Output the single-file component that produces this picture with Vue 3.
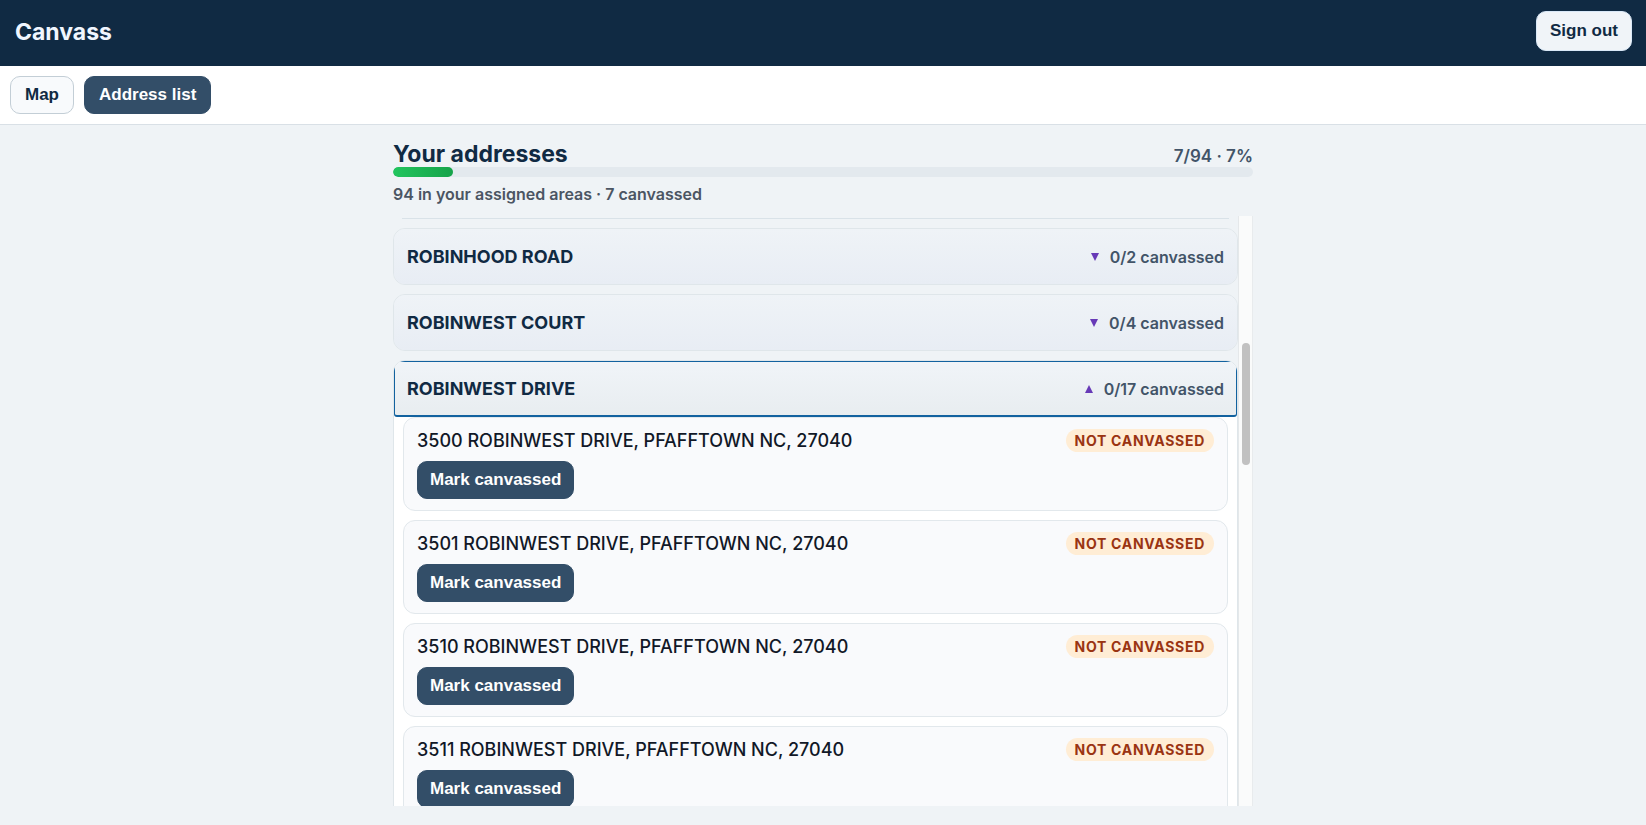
<script setup>
import { ref, computed } from 'vue'

const view = ref('list')
const total = 94
const done = 7
const percent = computed(() => Math.round((done / total) * 100))

const groups = ref([
  { street: 'ROBINHOOD ROAD', done: 0, count: 2, open: false, addresses: [] },
  { street: 'ROBINWEST COURT', done: 0, count: 4, open: false, addresses: [] },
  {
    street: 'ROBINWEST DRIVE',
    done: 0,
    count: 17,
    open: true,
    addresses: [
      '3500 ROBINWEST DRIVE, PFAFFTOWN NC, 27040',
      '3501 ROBINWEST DRIVE, PFAFFTOWN NC, 27040',
      '3510 ROBINWEST DRIVE, PFAFFTOWN NC, 27040',
      '3511 ROBINWEST DRIVE, PFAFFTOWN NC, 27040',
    ],
  },
])
</script>

<template>
  <div class="app">
    <header class="topbar">
      <h1 class="brand">Canvass</h1>
      <button type="button" class="btn sign-out">Sign out</button>
    </header>

    <nav class="tabs">
      <button type="button" class="btn tab" :class="{ active: view === 'map' }" @click="view = 'map'">Map</button>
      <button type="button" class="btn tab" :class="{ active: view === 'list' }" @click="view = 'list'">Address list</button>
    </nav>

    <main class="page">
      <div class="heading">
        <h2 class="title">Your addresses</h2>
        <span class="score">{{ done }}/{{ total }} · {{ percent }}%</span>
      </div>
      <div class="progress" role="progressbar" aria-label="Canvassed" :aria-valuenow="percent">
        <div class="progress-fill" :style="{ width: percent + '%' }"></div>
      </div>
      <p class="summary">{{ total }} in your assigned areas · {{ done }} canvassed</p>

      <div class="scroller">
        <div class="groups">
          <div class="group-end" aria-hidden="true"></div>
          <section v-for="group in groups" :key="group.street" class="group">
            <button
              type="button"
              class="group-head"
              :class="{ open: group.open }"
              :aria-expanded="group.open"
              @click="group.open = !group.open"
            >
              <span class="street">{{ group.street }}</span>
              <svg class="caret" viewBox="0 0 8 8" aria-hidden="true">
                <path :d="group.open ? 'M4 0 L8 8 H0 Z' : 'M0 0 H8 L4 8 Z'" />
              </svg>
              <span class="count">{{ group.done }}/{{ group.count }} canvassed</span>
            </button>
            <ul v-if="group.open" class="cards">
              <li v-for="address in group.addresses" :key="address" class="card">
                <div class="card-top">
                  <span class="address">{{ address }}</span>
                  <span class="badge">NOT CANVASSED</span>
                </div>
                <button type="button" class="btn mark">Mark canvassed</button>
              </li>
            </ul>
          </section>
        </div>
        <div class="track" aria-hidden="true"><div class="thumb"></div></div>
      </div>
    </main>
  </div>
</template>

<style>
body {
  background: #eff3f6;
}
</style>

<style scoped>
.app,
.app * {
  box-sizing: border-box;
}

.app {
  display: flex;
  flex-direction: column;
  height: 100vh;
  overflow: hidden;
  background: #eff3f6;
  color: #102a43;
  font-family: Inter, "Liberation Sans", sans-serif;
}

h1,
h2,
p,
ul {
  margin: 0;
  padding: 0;
}

.btn {
  border: 1px solid transparent;
  border-radius: 10px;
  font-family: "Liberation Sans", Arial, sans-serif;
  font-size: 17px;
  font-weight: 700;
  line-height: 20px;
  cursor: pointer;
}

.topbar {
  flex: none;
  display: flex;
  align-items: flex-start;
  justify-content: space-between;
  height: 66px;
  padding: 11px 14px 0 15px;
  background: #102a43;
}

.brand {
  color: #f0f6ff;
  font-size: 23px;
  line-height: 42px;
  font-weight: 700;
}

.sign-out {
  padding: 8px 13px;
  height: 40px;
  border-color: #d9e8f7;
  background: #f0f4f8;
  color: #102a43;
}

.tabs {
  flex: none;
  display: flex;
  gap: 10px;
  padding: 10px;
  border-bottom: 1px solid #d9e0e6;
  background: #fff;
}

.tab {
  height: 38px;
  padding: 0 14px;
  border-color: #c3ced6;
  background: #f8fafc;
  color: #102a43;
}

.tab.active {
  border-color: #334e68;
  background: #334e68;
  color: #fff;
}

.page {
  flex: 1;
  min-height: 0;
  display: flex;
  flex-direction: column;
  width: 100%;
  max-width: 860px;
  margin: 0 auto;
  padding: 14px 0 19px;
}

.heading {
  display: flex;
  align-items: baseline;
  justify-content: space-between;
  height: 28px;
}

.title {
  color: #102a43;
  font-size: 23px;
  line-height: 30px;
  font-weight: 700;
}

.score {
  color: #425468;
  font-size: 17px;
  font-weight: 600;
}

.progress {
  flex: none;
  height: 10px;
  border-radius: 5px;
  background: #e3e9ee;
  overflow: hidden;
}

.progress-fill {
  height: 100%;
  border-radius: 5px;
  background: linear-gradient(90deg, #22c55e, #16a34a);
}

.summary {
  padding-top: 5px;
  color: #4b5563;
  font-size: 16px;
  line-height: 24px;
  font-weight: 600;
}

.scroller {
  flex: 1;
  min-height: 0;
  display: flex;
  margin-top: 10px;
}

.groups {
  flex: 1;
  min-width: 0;
  display: flex;
  flex-direction: column;
  gap: 9px;
  overflow: hidden;
}

.group-end {
  flex: none;
  height: 3px;
  margin: 0 9px;
  border-bottom: 1px solid #d9e2e8;
}

.group {
  flex: none;
  border: 1px solid #dfe6ea;
  border-radius: 12px;
  background: #fff;
  overflow: hidden;
}

.group-head {
  display: flex;
  align-items: center;
  width: 100%;
  height: 55px;
  padding: 0 13px;
  border: 0;
  background: linear-gradient(180deg, #eff3f7, #e8edf4);
  color: #102a43;
  font-family: inherit;
  text-align: left;
  cursor: pointer;
}

.group-head.open {
  height: 56px;
  padding: 0 12px;
  border: 1px solid #12629f;
  border-bottom-width: 2px;
  border-radius: 3px;
  background: linear-gradient(180deg, #f0f4f8, #e8edf0);
}

.street {
  flex: 1;
  font-size: 18px;
  font-weight: 700;
}

.caret {
  width: 8px;
  height: 8px;
  margin-right: 11px;
  fill: #673ab7;
}

.count {
  color: #425468;
  font-size: 16px;
  font-weight: 600;
}

.cards {
  display: flex;
  flex-direction: column;
  gap: 9px;
  padding: 0 9px 9px;
  list-style: none;
}

.card {
  height: 94px;
  padding: 11px 13px;
  border: 1px solid #e2e8ec;
  border-radius: 12px;
  background: #f9fafc;
}

.card-top {
  display: flex;
  align-items: center;
  justify-content: space-between;
  height: 23px;
  margin-bottom: 9px;
}

.address {
  color: #111827;
  font-size: 18px;
  font-weight: 500;
}

.badge {
  padding: 0 9px;
  border-radius: 12px;
  background: #ffedd5;
  color: #9a3412;
  font-size: 14px;
  line-height: 23px;
  font-weight: 700;
  letter-spacing: 0.05em;
}

.mark {
  height: 38px;
  padding: 0 12px;
  background: #334e68;
  border-color: #334e68;
  color: #fff;
}

.track {
  flex: none;
  width: 15px;
  padding: 127px 3px 0;
  border-left: 1px solid #e5e8ea;
  border-right: 1px solid #e8ebed;
  background: #fafbfb;
}

.thumb {
  width: 8px;
  height: 122px;
  border-radius: 4px;
  background: #c1c1c1;
}
</style>
